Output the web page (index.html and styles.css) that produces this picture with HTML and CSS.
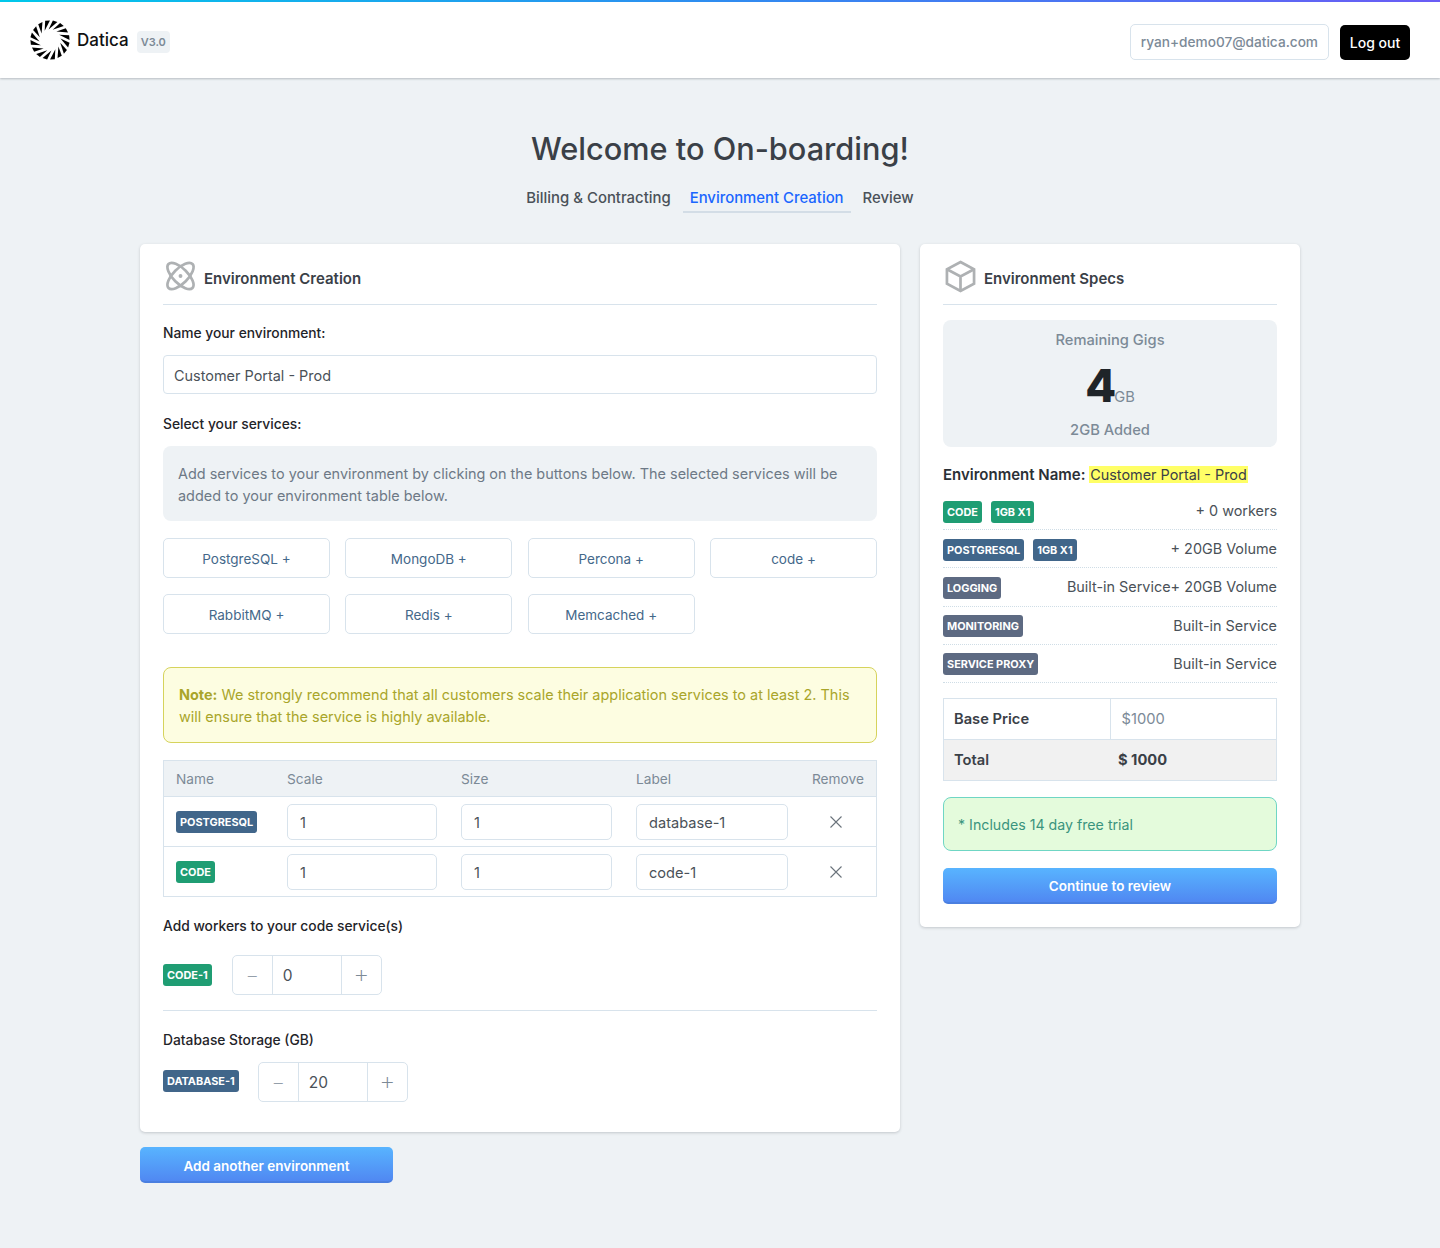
FILE: index.html
```html
<!DOCTYPE html>
<html lang="en">
<head>
<meta charset="utf-8">
<title>Datica On-boarding</title>
<link rel="stylesheet" href="styles.css">
</head>
<body>
<header class="topbar">
  <div class="brand">
    <svg class="logo" viewBox="-21 -21 42 42" aria-hidden="true">
      <defs><polygon id="w" points="-1.500,-11 3,-20.500 7.800,-19"/></defs>
      <use href="#w"/><use href="#w" transform="rotate(22.5)"/><use href="#w" transform="rotate(45)"/><use href="#w" transform="rotate(67.5)"/><use href="#w" transform="rotate(90)"/><use href="#w" transform="rotate(112.5)"/><use href="#w" transform="rotate(135)"/><use href="#w" transform="rotate(157.5)"/><use href="#w" transform="rotate(180)"/><use href="#w" transform="rotate(202.5)"/><use href="#w" transform="rotate(225)"/><use href="#w" transform="rotate(247.5)"/><use href="#w" transform="rotate(270)"/><use href="#w" transform="rotate(292.5)"/><use href="#w" transform="rotate(315)"/><use href="#w" transform="rotate(337.5)"/>
    </svg>
    <span class="brand-name">Datica</span>
    <span class="version">V3.0</span>
  </div>
  <div class="account">
    <span class="email">ryan+demo07@datica.com</span>
    <button class="logout">Log out</button>
  </div>
</header>

<main class="page">
  <h1 class="title">Welcome to On-boarding!</h1>
  <nav class="tabs">
    <a class="tab">Billing &amp; Contracting</a>
    <a class="tab tab-active">Environment Creation</a>
    <a class="tab">Review</a>
  </nav>

  <div class="columns">
    <div class="left-col">
      <section class="card card-left">
        <div class="card-head">
          <svg class="head-icon" viewBox="0 0 32 32" aria-hidden="true">
            <ellipse cx="16" cy="16" rx="7.600" ry="17.500" transform="rotate(-45 16 16)"/>
            <ellipse cx="16" cy="16" rx="7.600" ry="17.500" transform="rotate(45 16 16)"/>
            <circle class="fill" cx="16" cy="16" r="2"/>
          </svg>
          <h2 class="card-title">Environment Creation</h2>
        </div>

        <div class="field-label label-name">Name your environment:</div>
        <input class="text-input" value="Customer Portal - Prod">

        <div class="field-label label-services">Select your services:</div>
        <div class="info-box">Add services to your environment by clicking on the buttons below. The selected services will be added to your environment table below.</div>

        <div class="service-grid">
          <button class="service">PostgreSQL +</button>
          <button class="service">MongoDB +</button>
          <button class="service">Percona +</button>
          <button class="service">code +</button>
          <button class="service">RabbitMQ +</button>
          <button class="service">Redis +</button>
          <button class="service">Memcached +</button>
        </div>

        <div class="note"><strong>Note:</strong> We strongly recommend that all customers scale their application services to at least 2. This will ensure that the service is highly available.</div>

        <table class="svc-table">
          <colgroup><col class="c1"><col class="c2"><col class="c3"><col class="c4"><col class="c5"></colgroup>
          <thead><tr><th>Name</th><th>Scale</th><th>Size</th><th>Label</th><th>Remove</th></tr></thead>
          <tbody>
            <tr>
              <td><span class="badge badge-blue">POSTGRESQL</span></td>
              <td><input class="cell-input" value="1"></td>
              <td><input class="cell-input" value="1"></td>
              <td><input class="cell-input" value="database-1"></td>
              <td class="remove"><svg class="x" viewBox="0 0 12 12" aria-hidden="true"><path d="M.5.5l11 11M11.500.5l-11 11"/></svg></td>
            </tr>
            <tr class="last-row">
              <td><span class="badge badge-green">CODE</span></td>
              <td><input class="cell-input" value="1"></td>
              <td><input class="cell-input" value="1"></td>
              <td><input class="cell-input" value="code-1"></td>
              <td class="remove"><svg class="x" viewBox="0 0 12 12" aria-hidden="true"><path d="M.5.5l11 11M11.500.5l-11 11"/></svg></td>
            </tr>
          </tbody>
        </table>

        <div class="field-label label-workers">Add workers to your code service(s)</div>
        <div class="stepper-row row-workers">
          <span class="badge badge-green">CODE-1</span>
          <div class="stepper"><span class="step step-minus">–</span><span class="step-value">0</span><span class="step step-plus">+</span></div>
        </div>
        <hr class="rule">
        <div class="field-label label-storage">Database Storage (GB)</div>
        <div class="stepper-row row-storage">
          <span class="badge badge-blue">DATABASE-1</span>
          <div class="stepper"><span class="step step-minus">–</span><span class="step-value">20</span><span class="step step-plus">+</span></div>
        </div>
      </section>
      <button class="primary add-env">Add another environment</button>
    </div>

    <aside class="card card-right">
      <div class="card-head">
        <svg class="head-icon" viewBox="0 0 32 32" aria-hidden="true">
          <path d="M16 1.500 30 9v15l-14 7.500L2 24V9z"/>
          <path d="M2 9l14 7.500L30 9M16 16.500v15"/>
        </svg>
        <h2 class="card-title">Environment Specs</h2>
      </div>
      <div class="gigs">
        <div class="gigs-label">Remaining Gigs</div>
        <div class="gigs-value"><span class="gigs-num">4</span><span class="gigs-unit">GB</span></div>
        <div class="gigs-label">2GB Added</div>
      </div>
      <div class="env-name">Environment Name: <mark class="hl">Customer Portal - Prod</mark></div>
      <ul class="spec-list">
        <li class="spec"><span class="spec-tags"><span class="badge badge-green">CODE</span><span class="badge badge-green">1GB X1</span></span><span>+ 0 workers</span></li>
        <li class="spec"><span class="spec-tags"><span class="badge badge-blue">POSTGRESQL</span><span class="badge badge-blue">1GB X1</span></span><span>+ 20GB Volume</span></li>
        <li class="spec"><span class="spec-tags"><span class="badge badge-slate">LOGGING</span></span><span>Built-in Service+ 20GB Volume</span></li>
        <li class="spec"><span class="spec-tags"><span class="badge badge-slate">MONITORING</span></span><span>Built-in Service</span></li>
        <li class="spec"><span class="spec-tags"><span class="badge badge-slate">SERVICE PROXY</span></span><span>Built-in Service</span></li>
      </ul>
      <table class="price">
        <tr><th>Base Price</th><td class="price-base">$1000</td></tr>
        <tr class="price-total"><th>Total</th><td>$ 1000</td></tr>
      </table>
      <div class="trial">* Includes 14 day free trial</div>
      <button class="primary continue">Continue to review</button>
    </aside>
  </div>
</main>
</body>
</html>
```
FILE: styles.css
```css
* { box-sizing: border-box; }
html, body { margin: 0; padding: 0; }
body {
  background: #eef2f5;
  color: #3a4047;
  font-family: Inter, "Liberation Sans", sans-serif;
  font-size: 14.450px;
  min-height: 1248px;
}
button, input { font-family: inherit; }

.topbar {
  height: 78px;
  background: #fff;
  border-top: 2px solid transparent;
  border-image: linear-gradient(90deg, #00c8ea 0%, #2f8cf0 50%, #6a5cf5 100%) 1;
  border-bottom: 0;
  box-shadow: 0 1px 2px rgba(40, 50, 60, .28);
  display: flex;
  justify-content: space-between;
  align-items: center;
  padding: 4px 30px 0;
}
.brand { display: flex; align-items: center; margin-top: -4px; }
.logo { width: 40px; height: 40px; fill: #000; }
.brand-name { margin-left: 7px; font-size: 17px; font-weight: 500; color: #111; }
.version {
  margin-left: 8px;
  margin-top: 3px;
  background: #eef2f5;
  color: #7c8a97;
  font-size: 11px;
  font-weight: 600;
  padding: 4px 4px;
  border-radius: 4px;
}
.account { display: flex; align-items: center; gap: 11px; }
.email {
  height: 36px;
  border: 1px solid #d8e3ec;
  border-radius: 5px;
  padding: 0 10px;
  color: #7c8a97;
  font-size: 13.650px;
  font-weight: 500;
  display: flex;
  align-items: center;
}
.logout {
  height: 35px;
  width: 70px;
  background: #000;
  color: #fff;
  border: 0;
  border-radius: 5px;
  font-size: 14px;
  font-weight: 500;
}

.page { width: 1160px; margin: 0 auto; }
.title {
  margin: 52px 0 0;
  text-align: center;
  font-size: 30.700px;
  line-height: 38px;
  font-weight: 500;
  color: #3a4047;
}
.tabs { display: flex; justify-content: center; margin-top: 19px; gap: 5px; }
.tab {
  padding: 0 7px 2px;
  line-height: 22px;
  font-size: 14.900px;
  font-weight: 500;
  color: #4a5158;
  border-bottom: 2px solid transparent;
}
.tab-active { color: #1a66ff; border-bottom-color: #d3dde6; }

.columns { display: flex; gap: 20px; align-items: flex-start; margin-top: 31px; }
.left-col { width: 760px; }
.card {
  background: #fff;
  border-radius: 5px;
  box-shadow: 0 1px 3px rgba(40, 50, 60, .22);
  padding: 0 23px;
}
.card-left { height: 888px; }
.card-right { width: 380px; height: 683px; }
.card-head {
  height: 61px;
  border-bottom: 1px solid #d8e3ec;
  display: flex;
  align-items: center;
  gap: 8px;
  padding: 3px 0 0 2px;
}
.head-icon { width: 31px; height: 32px; fill: none; stroke: #aeb1b3; stroke-width: 2.800; overflow: visible; flex: none; }
.head-icon .fill { fill: #aeb1b3; stroke: none; }
.card-title { margin: 0; font-size: 15px; line-height: 20px; font-weight: 600; color: #3a4047; padding-top: 7px; }

.field-label { font-size: 13.800px; line-height: 20px; font-weight: 500; color: #1f2429; }
.label-name { margin-top: 18px; }
.label-services { margin-top: 20px; }
.label-workers { margin-top: 19px; }
.label-storage { margin-top: 19px; }

.text-input {
  display: block;
  width: 100%;
  height: 39px;
  margin-top: 12px;
  padding: 1px 10px 0;
  border: 1px solid #d8e3ec;
  border-radius: 4px;
  font-size: 14.450px;
  color: #4a5158;
  background: #fff;
}
.info-box {
  margin-top: 12px;
  height: 75px;
  padding: 17px 15px 0;
  background: #eef2f5;
  border-radius: 8px;
  line-height: 22px;
  color: #6d7986;
}
.service-grid {
  margin-top: 17px;
  display: grid;
  grid-template-columns: repeat(4, 1fr);
  gap: 16px 15.330px;
}
.service {
  height: 40px;
  padding-top: 3px;
  background: #fff;
  border: 1px solid #d8e3ec;
  border-radius: 5px;
  color: #44688a;
  font-size: 13.500px;
}
.note {
  margin-top: 33px;
  height: 76px;
  padding: 16px 15px 0;
  background: #fdfde1;
  border: 1px solid #d6d35c;
  border-radius: 8px;
  line-height: 22px;
  color: #a9a52a;
}
.note strong { font-weight: 700; }

.svc-table {
  margin-top: 17px;
  width: 714px;
  table-layout: fixed;
  border-collapse: separate;
  border-spacing: 0;
  border: 1px solid #d8e3ec;
}
.c1 { width: 111px; }
.c2 { width: 174px; }
.c3 { width: 175px; }
.c4 { width: 176px; }
.c5 { width: 76px; }
.svc-table th {
  height: 36px;
  background: #eef2f5;
  border-bottom: 1px solid #d8e3ec;
  padding: 0 12px;
  text-align: left;
  font-size: 13.700px;
  font-weight: 400;
  color: #7c8a97;
}
.svc-table td { height: 50px; padding: 0 12px; border-bottom: 1px solid #d8e3ec; }
.svc-table .last-row td { height: 49px; border-bottom: 0; }
.cell-input {
  display: block;
  width: 100%;
  height: 36px;
  padding: 2px 12px 0;
  border: 1px solid #d8e3ec;
  border-radius: 5px;
  font-size: 14.600px;
  color: #4a5158;
}
.svc-table td:nth-child(2) .cell-input { width: 150px; }
.remove { text-align: left; }
.x { display: block; width: 12px; height: 12px; margin-left: 18px; fill: none; stroke: #6a737b; stroke-width: 1.100; }

.badge {
  display: inline-block;
  padding: 0 4px;
  height: 22px;
  line-height: 23px;
  border-radius: 3px;
  color: #fff;
  font-size: 10.900px;
  font-weight: 700;
  white-space: nowrap;
}
.badge-green { background: #1f9d73; }
.badge-blue { background: #41668a; }
.badge-slate { background: #5d6a82; }

.stepper-row { display: flex; align-items: center; }
.row-workers { margin-top: 19px; gap: 20px; }
.row-storage { margin-top: 12px; gap: 19px; }
.row-storage .badge { margin-bottom: 2px; }
.stepper {
  display: flex;
  width: 150px;
  height: 40px;
  border: 1px solid #d8e3ec;
  border-radius: 5px;
  color: #7c8a97;
}
.step { width: 39px; display: flex; align-items: center; justify-content: center; font-weight: 200; flex: none; }
.step-minus { font-size: 18px; }
.step-plus { font-size: 25px; padding-bottom: 3px; }
.step-value {
  flex: 1;
  display: flex;
  align-items: center;
  padding-left: 10px;
  border-left: 1px solid #d8e3ec;
  border-right: 1px solid #d8e3ec;
  color: #4a5158;
  font-size: 15.500px;
}
.rule { margin: 15px 0 0; border: 0; border-top: 1px solid #d8e3ec; }

.primary {
  height: 36px;
  padding-top: 4px;
  border: 0;
  border-bottom: 2px solid #4a7fe0;
  border-radius: 5px;
  background: linear-gradient(180deg, #58b4ff 0%, #5088f2 100%);
  color: #fff;
  font-size: 13.500px;
  font-weight: 600;
}
.add-env { width: 253px; margin-top: 15px; display: block; }
.continue { width: 100%; margin-top: 17px; display: block; }

.gigs {
  margin-top: 15px;
  height: 127px;
  background: #eef2f5;
  border-radius: 8px;
  text-align: center;
  color: #7c8a97;
  padding-top: 9px;
  font-weight: 500;
  line-height: 22px;
}
.gigs-value { height: 59px; margin-top: 9px; display: flex; justify-content: center; align-items: baseline; }
.gigs-num { font-size: 45px; line-height: 52px; font-weight: 800; color: #1f2429; }
.gigs-unit { font-size: 14.700px; font-weight: 400; margin-left: -2px; }
.gigs-label { font-size: 14.700px; }

.env-name { margin-top: 17px; font-size: 15px; line-height: 22px; font-weight: 600; color: #2b3036; }
.hl { background: #ffff66; color: #3a4047; font-size: 14.400px; font-weight: 400; padding: 0 1px; }
.spec-list { list-style: none; margin: 6px 0 0; padding: 0; }
.spec {
  height: 38.200px;
  display: flex;
  justify-content: space-between;
  align-items: center;
  border-bottom: 1px dotted #cfdde6;
  font-size: 14.400px;
  color: #4a5158;
}
.spec-tags { display: flex; gap: 9px; padding-top: 2px; }
.price {
  margin-top: 15px;
  width: 100%;
  table-layout: fixed;
  border-collapse: collapse;
  border: 1px solid #d8e3ec;
  font-size: 14.700px;
}
.price th, .price td { height: 41px; padding: 0 11px; border: 1px solid #d8e3ec; text-align: left; }
.price th { font-weight: 600; padding-left: 10px; }
.price-base { color: #7c8a97; }
.price-total { background: #f1f1f1; }
.price-total td { font-weight: 700; padding-left: 8px; border-left: 0; }
.price-total th { border-right: 0; }
.trial {
  margin-top: 16px;
  height: 54px;
  padding: 2px 0 0 14px;
  display: flex;
  align-items: center;
  background: #e4fbdc;
  border: 1px solid #6fd6c4;
  border-radius: 8px;
  color: #3a947e;
  font-size: 14.200px;
}
```
